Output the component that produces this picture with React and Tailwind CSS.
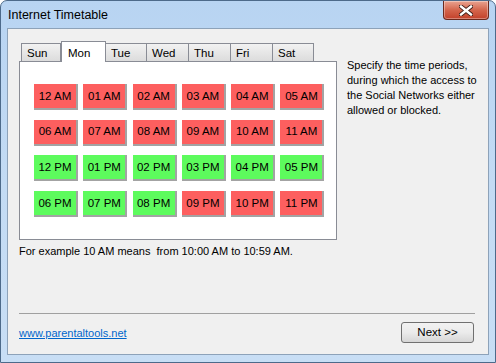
const font = { fontFamily: '"Liberation Sans", Arial, sans-serif' }

const days = ['Sun', 'Mon', 'Tue', 'Wed', 'Thu', 'Fri', 'Sat']
const tabWidths = ['w-[40px]', 'w-[45px]', 'w-[41px]', 'w-[42px]', 'w-[42px]', 'w-[42px]', 'w-[41px]']

// true = allowed (green), false = blocked (red)
const hours = [
  ['12 AM', false], ['01 AM', false], ['02 AM', false], ['03 AM', false], ['04 AM', false], ['05 AM', false],
  ['06 AM', false], ['07 AM', false], ['08 AM', false], ['09 AM', false], ['10 AM', false], ['11 AM', false],
  ['12 PM', true], ['01 PM', true], ['02 PM', true], ['03 PM', true], ['04 PM', true], ['05 PM', true],
  ['06 PM', true], ['07 PM', true], ['08 PM', true], ['09 PM', false], ['10 PM', false], ['11 PM', false],
]

function CloseButton() {
  return (
    <div className="flex h-[19px] w-[46px] items-center justify-center rounded-b-[4px] border border-t-0 border-[#6b2a1e] bg-gradient-to-b from-[#e8a391] via-[#d4654c] to-[#c2402a] shadow-[inset_0_0_0_1px_rgba(255,255,255,0.35)]">
      <svg width="14" height="11" viewBox="0 0 14 11">
        <path d="M2 1.5 L12 9.5 M12 1.5 L2 9.5" stroke="#3b1a14" strokeWidth="4.2" strokeLinecap="square" />
        <path d="M2 1.5 L12 9.5 M12 1.5 L2 9.5" stroke="#ffffff" strokeWidth="2.4" strokeLinecap="square" />
      </svg>
    </div>
  )
}

function Tabs() {
  return (
    <div className="flex h-[20px] items-end pl-[2px]">
      {days.map((d, i) =>
        i === 1 ? (
          <div
            key={d}
            className={`relative z-10 -mb-px flex h-[21px] ${tabWidths[i]} shrink-0 items-start border border-b-0 border-[#898c95] bg-white pl-[6px] pt-[3px] text-[11.5px] text-black`}
          >
            {d}
          </div>
        ) : (
          <div
            key={d}
            className={`flex h-[18px] ${tabWidths[i]} shrink-0 items-center border border-b-0 border-l-0 border-[#898c95] bg-gradient-to-b from-[#f2f2f2] to-[#dcdcdc] pl-[5px] pt-[2px] text-[11.5px] text-black first:border-l`}
          >
            {d}
          </div>
        )
      )}
    </div>
  )
}

export default function App() {
  return (
    <div
      className="flex h-[363px] w-[496px] flex-col rounded-t-[7px] border border-[#4d6a8a] bg-gradient-to-b from-[#b8d4f2] via-[#c3dbf4] to-[#c8def5]"
      style={font}
    >
      {/* title bar */}
      <div className="flex h-[27px] shrink-0 items-start justify-between">
        <div className="pl-[7px] pt-[7px] text-[12.5px] leading-[15px] text-black">Internet Timetable</div>
        <div className="mr-[6px]">
          <CloseButton />
        </div>
      </div>

      {/* client area */}
      <div className="mx-[6px] mb-[7px] flex flex-1 flex-col border border-[#8da2b9] bg-[#f0f0f0] px-[11px] pt-[12px]">
        <div className="flex">
          <div className="w-[318px] shrink-0">
            <Tabs />
            <div className="h-[179px] border border-[#898c95] bg-white pl-[14px] pt-[22px]">
              <div className="grid grid-cols-[repeat(6,44px)] gap-x-[5.3px] gap-y-[9.6px]">
                {hours.map(([label, ok]) => (
                  <div
                    key={label}
                    className={`flex h-[26px] items-center justify-center border-r-2 border-b-2 border-[#a3a3a3] pt-[1px] text-[11.5px] text-black ${
                      ok ? 'bg-[#5dfb5d]' : 'bg-[#fd5f5f]'
                    }`}
                  >
                    {label}
                  </div>
                ))}
              </div>
            </div>
          </div>
          <p className="ml-[10px] w-[142px] pt-[17px] text-[11px] leading-[15px] text-black">
            Specify the time periods, during which the access to the Social Networks either allowed or blocked.
          </p>
        </div>

        <p className="mt-[4px] text-[11px] leading-[15px] text-black">
          For example 10 AM means&nbsp; from 10:00 AM to 10:59 AM.
        </p>

        <div className="mt-[54px] mr-[2px] h-px bg-[#a0a0a0]" />

        <div className="mt-[8px] flex items-center justify-between">
          <a href="#" className="pt-[1px] text-[11px] text-[#0066cc] underline">
            www.parentaltools.net
          </a>
          <button className="mr-[3px] flex h-[21px] w-[73px] items-center justify-center rounded-[3px] border border-[#707070] bg-gradient-to-b from-[#f2f2f2] via-[#ebebeb] to-[#d6d6d6] text-[11.5px] text-black">
            Next &gt;&gt;
          </button>
        </div>
      </div>
    </div>
  )
}
